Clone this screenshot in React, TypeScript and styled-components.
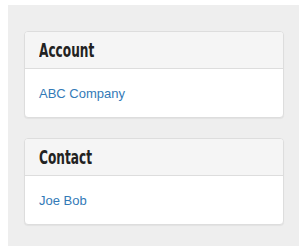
import React from 'react';
import styled, { createGlobalStyle } from 'styled-components';

const GlobalStyle = createGlobalStyle`
  html, body {
    margin: 0;
    background: #fff;
  }
  body {
    font-family: "Liberation Sans", Arial, sans-serif;
  }
`;

const Page = styled.div`
  padding: 5px 6px 6px 8px;
`;

const Well = styled.div`
  background: #eeeeee;
  padding: 26px 15px 1px 16px;
`;

const Panel = styled.div`
  background: #fff;
  border: 1px solid #dddddd;
  border-radius: 4px;
  box-shadow: 0 1px 1px rgba(0, 0, 0, 0.05);
  margin-bottom: 20px;
  overflow: hidden;
`;

const PanelHeading = styled.div`
  background: #f5f5f5;
  border-bottom: 1px solid #dddddd;
  height: 36px;
  padding: 0 14px;
  display: flex;
  align-items: center;
`;

/* no condensed face installed, so squeeze the bold sans to look like the heading font */
const PanelTitle = styled.h3`
  margin: 0;
  display: inline-block;
  font-family: "DejaVu Sans", sans-serif;
  font-weight: bold;
  font-size: 19px;
  color: #222;
  transform: scaleX(0.64);
  transform-origin: left center;
`;

const PanelBody = styled.div`
  height: 48px;
  padding: 0 14px;
  display: flex;
  align-items: center;
`;

const Link = styled.a`
  color: #337ab7;
  font-size: 13px;
  text-decoration: none;
`;

const panels = [
  { title: 'Account', link: 'ABC Company' },
  { title: 'Contact', link: 'Joe Bob' },
];

export default function App() {
  return (
    <Page>
      <GlobalStyle />
      <Well>
        {panels.map((p) => (
          <Panel key={p.title}>
            <PanelHeading>
              <PanelTitle>{p.title}</PanelTitle>
            </PanelHeading>
            <PanelBody>
              <Link href="#">{p.link}</Link>
            </PanelBody>
          </Panel>
        ))}
      </Well>
    </Page>
  );
}
